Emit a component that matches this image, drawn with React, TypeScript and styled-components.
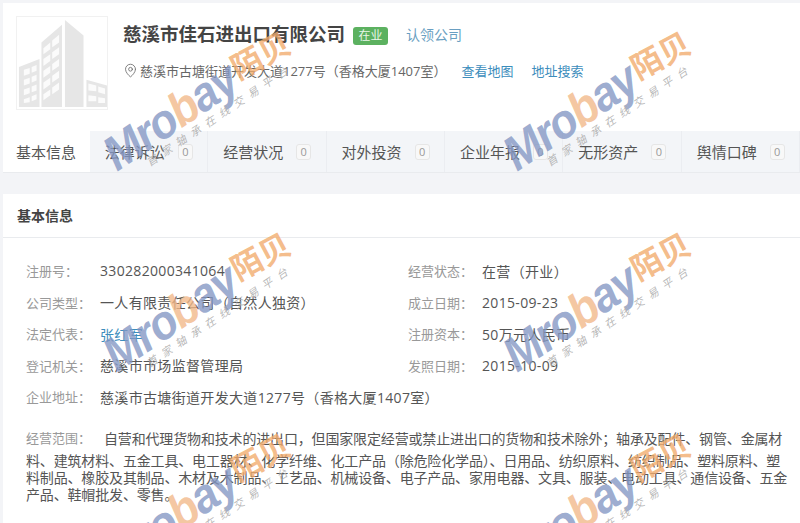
import React from 'react'
import styled, { createGlobalStyle } from 'styled-components'
import { MapPin } from 'lucide-react'

const GlobalStyle = createGlobalStyle`
  html, body {
    margin: 0;
    padding: 0;
    background: #f3f4f7;
  }
  body {
    font-family: "Open Sans", "Noto Sans CJK SC", sans-serif;
    color: #555;
  }
`

const Page = styled.div`
  position: relative;
  width: 800px;
  height: 523px;
  overflow: hidden;
  padding: 3px 0 0 3px;
  box-sizing: border-box;
`

const Header = styled.div`
  display: flex;
  height: 128px;
  box-sizing: border-box;
  padding: 13px 0 0 13px;
  background: #fff;
`

const LogoBox = styled.div`
  width: 92px;
  height: 94px;
  box-sizing: border-box;
  border: 1px solid #f1f1f1;
  display: flex;
  align-items: flex-end;
  justify-content: center;
`

const HeaderInfo = styled.div`
  margin-left: 15px;
  padding-top: 5px;
`

const TitleRow = styled.div`
  display: flex;
  align-items: center;
  height: 26px;
`

const Title = styled.h1`
  margin: 0;
  font-size: 18.5px;
  line-height: 26px;
  font-weight: 700;
  color: #444;
`

const StatusTag = styled.span`
  margin: 4px 0 0 8px;
  width: 35px;
  height: 18px;
  border-radius: 3px;
  background: #5cb160;
  color: #e8f5e8;
  font-size: 12px;
  line-height: 18px;
  text-align: center;
`

const ClaimLink = styled.a`
  margin-left: 18px;
  font-size: 14px;
  color: #6a9fc2;
`

const AddressRow = styled.div`
  display: flex;
  align-items: center;
  margin-top: 13px;
  height: 20px;
  font-size: 13px;
  color: #666;

  svg {
    margin-right: 2px;
    color: #666;
  }
`

const HeaderLink = styled.a`
  margin-left: ${({ $gap }: { $gap: number }) => $gap}px;
  font-size: 13px;
  color: #3c8dbc;
`

const TabBar = styled.div`
  display: flex;
  height: 42px;
  background: #f3f5f8;
  border-bottom: 1px solid #e9ebee;
  box-sizing: border-box;
`

const Tab = styled.div<{ $active?: boolean }>`
  display: flex;
  align-items: center;
  box-sizing: border-box;
  width: ${({ $active }) => ($active ? '87px' : '118.6px')};
  padding-left: ${({ $active }) => ($active ? '13px' : '15px')};
  background: ${({ $active }) => ($active ? '#fff' : 'transparent')};
  border-right: ${({ $active }) => ($active ? 'none' : '1px solid #ebedf1')};
  font-size: 15px;
  color: #555;
`

const Count = styled.span`
  margin-left: 13px;
  width: 15px;
  height: 16px;
  box-sizing: border-box;
  border: 1px solid #e6e6e6;
  border-radius: 3px;
  background: #f8f8f8;
  color: #999;
  font-size: 11px;
  line-height: 14px;
  text-align: center;
`

const Section = styled.div`
  margin-top: 21px;
  height: 330px;
  background: #fff;
`

const SectionTitle = styled.div`
  height: 44px;
  box-sizing: border-box;
  padding-left: 14px;
  border-bottom: 1px solid #e9ebee;
  font-size: 14px;
  font-weight: 700;
  line-height: 43px;
  color: #444;
`

const InfoGrid = styled.div`
  display: grid;
  grid-template-columns: 382px 1fr;
  grid-auto-rows: 31.5px;
  padding: 17px 0 0 23px;
`

const InfoItem = styled.div<{ $wide?: boolean }>`
  display: flex;
  align-items: center;
  white-space: nowrap;
  grid-column: ${({ $wide }) => ($wide ? '1 / 3' : 'auto')};
`

const Label = styled.span`
  width: 74px;
  flex: none;
  font-size: 13px;
  color: #999;
`

const Value = styled.span<{ $link?: boolean }>`
  font-size: 14px;
  letter-spacing: 0.33px;
  color: ${({ $link }) => ($link ? '#3c8dbc' : '#555')};
`

const Scope = styled.div`
  margin: 13px 0 0 23px;
  font-size: 14px;
  line-height: 17px;
  letter-spacing: -0.16px;
  color: #555;
`

const ScopeFirst = styled.div`
  display: flex;
  align-items: center;
  height: 26px;
  white-space: nowrap;

  ${Label} {
    width: 78px;
    letter-spacing: 0;
  }
`

const ScopeLine = styled.div`
  white-space: nowrap;
`

const WatermarkLayer = styled.div`
  position: absolute;
  inset: 0;
  pointer-events: none;
  display: grid;
  grid-template-columns: repeat(2, 400px);
  grid-auto-rows: 201px;
`

function Watermark() {
  return (
    <svg width="400" height="201" viewBox="0 0 400 201" style={{ overflow: 'visible' }}>
      <g transform="translate(117 172) rotate(-34)">
        <g transform="scale(0.93 1)">
          <text
            fontFamily='"Liberation Sans", sans-serif'
            fontWeight="700"
            fontStyle="italic"
            fontSize="48"
            letterSpacing="-1.5"
            fill="#8497c4"
            fillOpacity="0.8"
          >
            Mro<tspan fill="#f2b888">b</tspan>ay
          </text>
        </g>
        <g transform="translate(152 -8) rotate(6)">
          <text
            fontFamily='"Noto Sans CJK SC", sans-serif'
            fontWeight="700"
            fontSize="31"
            fill="#f2ab6c"
            fillOpacity="0.8"
          >
            陌贝
          </text>
        </g>
        <text
          x="30"
          y="14"
          fontFamily='"Noto Sans CJK SC", sans-serif'
          fontSize="11"
          fontStyle="italic"
          letterSpacing="6.4"
          fill="#b0b0b0"
          fillOpacity="0.9"
        >
          首家轴承在线交易平台
        </text>
      </g>
    </svg>
  )
}

function BuildingIcon() {
  return (
    <svg width="92" height="92" viewBox="0 0 92 92">
      <path
        fill="#e6e6e6"
        d="M2 91V50L23 42V91ZM25 91V25L46 7V91ZM49 2L68 18V91H49ZM71 91V63L92 69V91Z"
      />
      <g fill="#fbfbfb">
        <path d="M7 53l6-2v6l-6 2ZM15 50l5-2v6l-5 2ZM7 63l6-2v6l-6 2ZM15 60l5-2v6l-5 2ZM7 73l6-2v6l-6 2ZM15 70l5-2v6l-5 2ZM7 83l6-2v5l-6 1ZM15 80l5-2v5l-5 2Z" />
        <path d="M27 31l7-6v7l-7 5ZM36 23l7-6v8l-7 5ZM27 42l7-5v7l-7 5ZM36 35l7-5v7l-7 5ZM27 54l7-5v7l-7 5ZM36 47l7-5v7l-7 5ZM27 66l7-5v7l-7 5ZM36 59l7-5v7l-7 5ZM27 78l7-5v6l-7 5ZM36 71l7-5v7l-7 5Z" />
        <path d="M73 67l8 2v6l-8-1ZM83 70l7 2v6l-7-2ZM73 79l8 1v5h-8ZM83 81l7 1v5h-7Z" />
      </g>
    </svg>
  )
}

const tabs = ['法律诉讼', '经营状况', '对外投资', '企业年报', '无形资产', '舆情口碑']

const infoRows = [
  { label: '注册号：', value: '330282000341064' },
  { label: '经营状态：', value: '在营（开业）' },
  { label: '公司类型：', value: '一人有限责任公司（自然人独资）' },
  { label: '成立日期：', value: '2015-09-23' },
  { label: '法定代表：', value: '张红军', link: true },
  { label: '注册资本：', value: '50万元人民币' },
  { label: '登记机关：', value: '慈溪市市场监督管理局' },
  { label: '发照日期：', value: '2015-10-09' },
]

export default function App() {
  return (
    <Page>
      <GlobalStyle />
      <Header>
        <LogoBox>
          <BuildingIcon />
        </LogoBox>
        <HeaderInfo>
          <TitleRow>
            <Title>慈溪市佳石进出口有限公司</Title>
            <StatusTag>在业</StatusTag>
            <ClaimLink>认领公司</ClaimLink>
          </TitleRow>
          <AddressRow>
            <MapPin size={15} strokeWidth={1.3} />
            慈溪市古塘街道开发大道1277号（香格大厦1407室）
            <HeaderLink $gap={15}>查看地图</HeaderLink>
            <HeaderLink $gap={18}>地址搜索</HeaderLink>
          </AddressRow>
        </HeaderInfo>
      </Header>
      <TabBar>
        <Tab $active>基本信息</Tab>
        {tabs.map(name => (
          <Tab key={name}>
            {name}
            <Count>0</Count>
          </Tab>
        ))}
      </TabBar>
      <Section>
        <SectionTitle>基本信息</SectionTitle>
        <InfoGrid>
          {infoRows.map(row => (
            <InfoItem key={row.label}>
              <Label>{row.label}</Label>
              <Value $link={row.link}>{row.value}</Value>
            </InfoItem>
          ))}
          <InfoItem $wide>
            <Label>企业地址：</Label>
            <Value>慈溪市古塘街道开发大道1277号（香格大厦1407室）</Value>
          </InfoItem>
        </InfoGrid>
        <Scope>
          <ScopeFirst>
            <Label>经营范围：</Label>
            自营和代理货物和技术的进出口，但国家限定经营或禁止进出口的货物和技术除外；轴承及配件、钢管、金属材
          </ScopeFirst>
          <ScopeLine>料、建筑材料、五金工具、电工器材、化学纤维、化工产品（除危险化学品）、日用品、纺织原料、纺织制品、塑料原料、塑</ScopeLine>
          <ScopeLine>料制品、橡胶及其制品、木材及木制品、工艺品、机械设备、电子产品、家用电器、文具、服装、电动工具、通信设备、五金</ScopeLine>
          <ScopeLine>产品、鞋帽批发、零售。</ScopeLine>
        </Scope>
      </Section>
      <WatermarkLayer>
        {Array.from({ length: 6 }, (_, i) => (
          <Watermark key={i} />
        ))}
      </WatermarkLayer>
    </Page>
  )
}
